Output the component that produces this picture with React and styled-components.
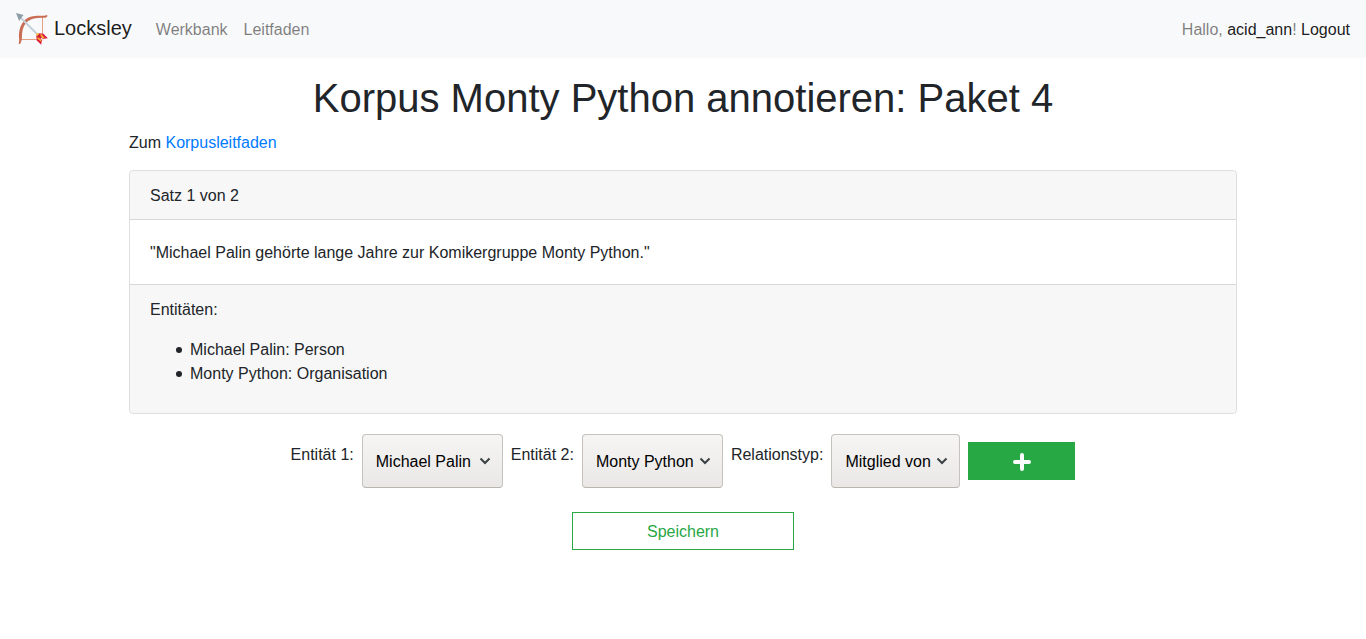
import React from "react";
import styled, { createGlobalStyle } from "styled-components";

const GlobalStyle = createGlobalStyle`
  *, *::before, *::after { box-sizing: border-box; }
  body {
    margin: 0;
    background: #fff;
    color: #212529;
    font: 16px/24px "Liberation Sans", Arial, sans-serif;
  }
`;

const Navbar = styled.nav`
  display: flex;
  align-items: center;
  min-height: 58px;
  padding: 8px 16px;
  background: #f8f9fa;
`;

const Brand = styled.a`
  display: flex;
  align-items: center;
  gap: 6px;
  margin-right: 24px;
  color: rgba(0, 0, 0, 0.9);
  font-size: 20px;
  line-height: 28px;
  text-decoration: none;
`;

const BrandName = styled.span`
  padding-bottom: 2px;
`;

const NavList = styled.ul`
  display: flex;
  gap: 16px;
  margin: 0;
  padding: 2px 0 0;
  list-style: none;
`;

const NavLink = styled.a`
  color: rgba(0, 0, 0, 0.5);
  text-decoration: none;
`;

const UserText = styled.span`
  margin-left: auto;
  padding-top: 2px;
  color: rgba(0, 0, 0, 0.5);
`;

const UserLink = styled.a`
  color: rgba(0, 0, 0, 0.9);
  text-decoration: none;
`;

const Container = styled.main`
  max-width: 1140px;
  margin: 0 auto;
  padding: 16px;
`;

const Title = styled.h1`
  margin: 0 0 9px;
  font-size: 40px;
  font-weight: 400;
  line-height: 48px;
  text-align: center;
`;

const Intro = styled.p`
  margin: 0 0 15px;
`;

const Link = styled.a`
  color: #007bff;
  text-decoration: none;
`;

const Card = styled.section`
  border: 1px solid rgba(0, 0, 0, 0.125);
  border-radius: 4px;
  overflow: hidden;
`;

const CardHeader = styled.header`
  padding: 13px 20px 11px;
  background: rgba(0, 0, 0, 0.03);
  border-bottom: 1px solid rgba(0, 0, 0, 0.125);
`;

const CardBody = styled.div`
  padding: 21px 20px 19px;
`;

const CardFooter = styled.footer`
  padding: 13px 20px 11px;
  background: rgba(0, 0, 0, 0.03);
  border-top: 1px solid rgba(0, 0, 0, 0.125);
`;

const ListTitle = styled.p`
  margin: 0 0 16px;
`;

const EntityList = styled.ul`
  margin: 0 0 16px;
  padding-left: 26px;
  list-style: none;
`;

const EntityItem = styled.li`
  display: flex;
  align-items: center;
  gap: 8px;

  &::before {
    content: "";
    width: 6px;
    height: 6px;
    border-radius: 50%;
    background: currentColor;
  }
`;

const RelationForm = styled.form`
  display: flex;
  flex-direction: column;
  align-items: center;
  gap: 24px;
  margin-top: 20px;
`;

const FieldRow = styled.div`
  display: flex;
  flex-wrap: wrap;
  justify-content: center;
  align-items: flex-start;
  gap: 8px;
`;

const Label = styled.label`
  padding-top: 9px;
`;

const SelectBox = styled.span`
  position: relative;
  display: flex;
`;

const Select = styled.select`
  appearance: none;
  height: 54px;
  padding: 2px 28px 0 13px;
  border: 1px solid #c6c2bd;
  border-bottom-color: #b9b4ae;
  border-radius: 4px;
  background: linear-gradient(#f6f5f4, #e9e8e7);
  color: #000;
  font: inherit;
`;

const Chevron = styled.svg`
  position: absolute;
  top: 23px;
  right: 12px;
  pointer-events: none;
`;

const AddButton = styled.button`
  display: flex;
  align-items: center;
  justify-content: center;
  width: 107px;
  height: 38px;
  margin-top: 8px;
  padding: 2px 0 0;
  border: 1px solid #28a745;
  background: #28a745;
  color: #fff;
`;

const SaveButton = styled.button`
  width: 20%;
  min-width: 120px;
  height: 38px;
  padding: 2px 0 0;
  border: 1px solid #28a745;
  background: transparent;
  color: #28a745;
  font: inherit;
`;

function BowLogo() {
  return (
    <svg width="32" height="32" viewBox="0 0 32 32" aria-hidden="true">
      <path d="M26.500 4V22M4.500 26.500H22" fill="none" stroke="#e2a283" strokeWidth="1" />
      <path
        d="M31.500 2.600 C31 4.800 29.500 4.900 27 4.800 C21 4.600 15.500 5.500 11.500 8.500 C7.500 12 6.300 17 6 22 C5.900 25.500 5.800 29.500 3.600 31.200 L2.600 30.400 C3.500 28.500 3.200 27 3 25 C2.700 18.500 4 12 8.500 7.200 C13.500 2.700 20 2.900 25.500 2.800 C28 2.800 29.500 3 30.700 2.100 Z"
        fill="#c96d54"
      />
      <path d="M3.500 3.500L24 24" stroke="#c3d0d8" strokeWidth="2" />
      <path d="M0 0L7.500 2L5.300 4.700L3.200 8Z" fill="#8c9da6" />
      <path d="M22.800 22.300L22.600 20.200L27.500 20.800L31.800 25.200L26.600 26Z" fill="#dc1f3c" />
      <path d="M22.300 22.800L20.200 22.600L20.800 27.500L25.200 31.800L26 26.600Z" fill="#dc1f3c" />
      <path d="M24 21.500L25.800 21.500L28.600 25L26.500 25.200Z" fill="#fbb52d" />
      <path d="M21.500 24L21.500 25.800L25 28.600L25.200 26.500Z" fill="#fbb52d" />
      <path d="M20.200 20.400L22.600 20.200L22.800 22.800L20.200 22.600Z" fill="#fbc02d" />
      <path d="M22 22L25.500 25.500" stroke="#c8202f" strokeWidth="1.600" />
      <path d="M25 25L28 28" stroke="#f6e3e1" strokeWidth="1.300" />
    </svg>
  );
}

function SelectField({ id, label, options, defaultValue }) {
  return (
    <>
      <Label htmlFor={id}>{label}</Label>
      <SelectBox>
        <Select id={id} defaultValue={defaultValue}>
          {options.map((option) => (
            <option key={option}>{option}</option>
          ))}
        </Select>
        <Chevron width="12" height="8" viewBox="0 0 12 8" aria-hidden="true">
          <path d="M1.500 1.500L6 6L10.500 1.500" fill="none" stroke="#3b4144" strokeWidth="2" />
        </Chevron>
      </SelectBox>
    </>
  );
}

const entities = ["Michael Palin", "Monty Python"];

export default function App() {
  return (
    <>
      <GlobalStyle />
      <Navbar>
        <Brand href="#">
          <BowLogo />
          <BrandName>Locksley</BrandName>
        </Brand>
        <NavList>
          <li><NavLink href="#">Werkbank</NavLink></li>
          <li><NavLink href="#">Leitfaden</NavLink></li>
        </NavList>
        <UserText>
          Hallo, <UserLink href="#">acid_ann</UserLink>! <UserLink href="#">Logout</UserLink>
        </UserText>
      </Navbar>
      <Container>
        <Title>Korpus Monty Python annotieren: Paket 4</Title>
        <Intro>
          Zum <Link href="#">Korpusleitfaden</Link>
        </Intro>
        <Card>
          <CardHeader>Satz 1 von 2</CardHeader>
          <CardBody>"Michael Palin gehörte lange Jahre zur Komikergruppe Monty Python."</CardBody>
          <CardFooter>
            <ListTitle>Entitäten:</ListTitle>
            <EntityList>
              <EntityItem>Michael Palin: Person</EntityItem>
              <EntityItem>Monty Python: Organisation</EntityItem>
            </EntityList>
          </CardFooter>
        </Card>
        <RelationForm onSubmit={(event) => event.preventDefault()}>
          <FieldRow>
            <SelectField id="entity-1" label="Entität 1:" options={entities} defaultValue="Michael Palin" />
            <SelectField id="entity-2" label="Entität 2:" options={entities} defaultValue="Monty Python" />
            <SelectField id="relation" label="Relationstyp:" options={["Mitglied von"]} defaultValue="Mitglied von" />
            <AddButton type="button" aria-label="Relation hinzufügen">
              <svg width="18" height="18" viewBox="0 0 18 18" aria-hidden="true">
                <path d="M9 2V16M2 9H16" stroke="currentColor" strokeWidth="4" strokeLinecap="round" />
              </svg>
            </AddButton>
          </FieldRow>
          <SaveButton type="submit">Speichern</SaveButton>
        </RelationForm>
      </Container>
    </>
  );
}
